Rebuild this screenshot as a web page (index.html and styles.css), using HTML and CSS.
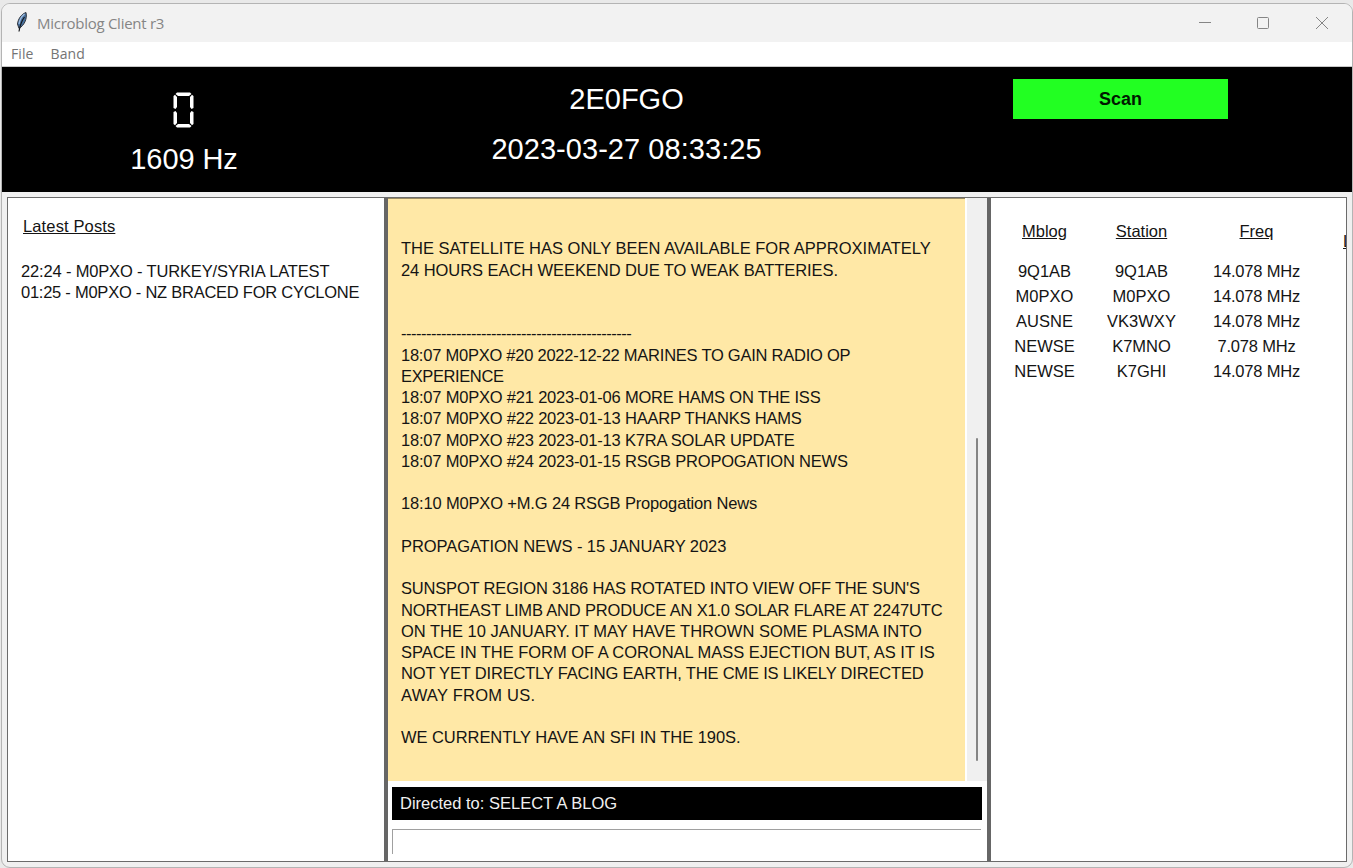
FILE: index.html
```html
<!DOCTYPE html>
<html lang="en">
<head>
<meta charset="utf-8">
<title>Microblog Client r3</title>
<link rel="stylesheet" href="styles.css">
</head>
<body>
<div class="window">
  <header class="titlebar">
    <svg class="feather" width="14" height="22" viewBox="0 0 14 22">
      <path d="M11 1.500C6.500 3 3 8 2.500 13L4 17.500C9 14.500 12.500 8 11 1.500Z" fill="#48729f" stroke="#30343c" stroke-width="1"/>
      <path d="M9.500 3C6 6 4.500 9 4 13" fill="none" stroke="#9dbbe0" stroke-width="1.300"/>
      <path d="M9.500 6C6.500 10 5 14 4 20.500" fill="none" stroke="#15171c" stroke-width="1.200"/>
    </svg>
    <span class="title">Microblog Client r3</span>
    <svg class="controls" width="132" height="14" viewBox="0 0 132 14" fill="none" stroke="#858585">
      <path d="M1 6.500H13"/>
      <rect x="59.500" y="1.500" width="11" height="11" rx="1"/>
      <path d="M118 1L130 13M130 1L118 13"/>
    </svg>
  </header>
  <nav class="menubar"><span>File</span><span>Band</span></nav>
  <section class="status">
    <div class="meter">
      <svg class="digit" width="22" height="36" viewBox="0 0 22 36" fill="#fff">
        <path d="M4 .5H17L18.500 2L16 4H5L2.500 2ZM5 32H16L18.500 34L17 35.500H4L2.500 34ZM.5 4L2 2.800L4 5V15L2.500 17L.5 16ZM20.500 4L19 2.800L17 5V15L18.500 17L20.500 16ZM.5 20L2.500 19L4 21V31L2 33.200L.5 32ZM20.500 20L18.500 19L17 21V31L19 33.200L20.500 32Z"/>
      </svg>
      <div class="hz">1609 Hz</div>
    </div>
    <div class="ident"><div class="call">2E0FGO</div><div class="clock">2023-03-27 08:33:25</div></div>
    <button class="scan">Scan</button>
  </section>
  <main class="panes">
    <section class="posts">
      <h2>Latest Posts</h2>
      <div class="row r1">22:24 - M0PXO - TURKEY/SYRIA LATEST</div>
      <div class="row r2">01:25 - M0PXO - NZ BRACED FOR CYCLONE</div>
    </section>
    <section class="feed">
      <div class="reader">
        <div class="text">
          <div class="l1">THE SATELLITE HAS ONLY BEEN AVAILABLE FOR APPROXIMATELY</div>
          <div class="l2">24 HOURS EACH WEEKEND DUE TO WEAK BATTERIES.</div>
          <div></div>
          <div></div>
          <div class="l5">----------------------------------------------</div>
          <div class="l6">18:07 M0PXO #20 2022-12-22 MARINES TO GAIN RADIO OP</div>
          <div class="l7">EXPERIENCE</div>
          <div class="l8">18:07 M0PXO #21 2023-01-06 MORE HAMS ON THE ISS</div>
          <div class="l9">18:07 M0PXO #22 2023-01-13 HAARP THANKS HAMS</div>
          <div class="l10">18:07 M0PXO #23 2023-01-13 K7RA SOLAR UPDATE</div>
          <div class="l11">18:07 M0PXO #24 2023-01-15 RSGB PROPOGATION NEWS</div>
          <div></div>
          <div class="l13">18:10 M0PXO +M.G 24 RSGB Propogation News</div>
          <div></div>
          <div class="l15">PROPAGATION NEWS - 15 JANUARY 2023</div>
          <div></div>
          <div class="l17">SUNSPOT REGION 3186 HAS ROTATED INTO VIEW OFF THE SUN'S</div>
          <div class="l18">NORTHEAST LIMB AND PRODUCE AN X1.0 SOLAR FLARE AT 2247UTC</div>
          <div class="l19">ON THE 10 JANUARY. IT MAY HAVE THROWN SOME PLASMA INTO</div>
          <div class="l20">SPACE IN THE FORM OF A CORONAL MASS EJECTION BUT, AS IT IS</div>
          <div class="l21">NOT YET DIRECTLY FACING EARTH, THE CME IS LIKELY DIRECTED</div>
          <div class="l22">AWAY FROM US.</div>
          <div></div>
          <div class="l24">WE CURRENTLY HAVE AN SFI IN THE 190S.</div>
        </div>
        <div class="scrollbar"><div class="thumb"></div></div>
      </div>
      <div class="directed"><span>Directed to: SELECT A BLOG</span></div>
      <div class="entry"></div>
    </section>
    <section class="stations">
      <div class="cell c1 head">Mblog</div><div class="cell c2 head">Station</div><div class="cell c3 head">Freq</div><div class="cut head">L</div>
      <div class="cell c1">9Q1AB</div><div class="cell c2">9Q1AB</div><div class="cell c3">14.078 MHz</div><div></div>
      <div class="cell c1">M0PXO</div><div class="cell c2">M0PXO</div><div class="cell c3">14.078 MHz</div><div></div>
      <div class="cell c1">AUSNE</div><div class="cell c2">VK3WXY</div><div class="cell c3">14.078 MHz</div><div></div>
      <div class="cell c1">NEWSE</div><div class="cell c2">K7MNO</div><div class="cell c3">7.078 MHz</div><div></div>
      <div class="cell c1">NEWSE</div><div class="cell c2">K7GHI</div><div class="cell c3">14.078 MHz</div><div></div>
    </section>
  </main>
</div>
</body>
</html>
```
FILE: styles.css
```css
* { box-sizing: border-box; }
body { margin: 0; height: 868px; overflow: hidden; background: #e9e9e9; padding: 3px 0 0 1px; font-family: "Liberation Sans", Arial, sans-serif; color: #141414; }
.window { width: 1352px; height: 865px; border: 1px solid #b4b4b4; border-radius: 9px; background: #f0f0f0; overflow: hidden; display: flex; flex-direction: column; }
.titlebar { height: 38px; flex: none; background: #f2f2f2; display: flex; align-items: center; padding: 0 22px 0 13px; }
.feather { margin-top: -2px; }
.title { margin-left: 8px; margin-top: -1px; font: 15px/20px "Open Sans", sans-serif; letter-spacing: -0.27px; color: #858585; white-space: nowrap; }
.controls { margin-left: auto; }
.menubar { height: 24px; flex: none; background: #fff; display: flex; gap: 17px; padding-left: 9px; font: 14px/24px "Open Sans", sans-serif; letter-spacing: 0.1px; color: #747474; }
.status { height: 126px; flex: none; border-top: 1px solid #c8c8c8; background: #000; color: #fff; display: flex; font-size: 29px; }
.meter { width: 364px; display: flex; flex-direction: column; align-items: center; padding-top: 25px; }
.digit { display: block; }
.hz { margin-top: 14px; line-height: 34px; letter-spacing: -0.1px; }
.ident { width: 521px; display: flex; flex-direction: column; align-items: center; padding-top: 15px; gap: 16px; line-height: 34px; }
.clock { letter-spacing: 0.05px; }
.scan { margin: 12px 0 0 126px; width: 215px; height: 40px; border: 0; border-radius: 0; padding: 1px 0 0; background: #22ff22; color: #001900; font: bold 18px "Liberation Sans", Arial, sans-serif; }
.panes { margin: 5px 5px 5px 5px; height: 665px; border: 1px solid #6b6b6b; display: flex; background: #fff; overflow: hidden; font-size: 16.500px; white-space: nowrap; }
.posts { width: 380px; flex: none; border-right: 4px solid #666; padding: 18px 0 0 13px; }
.posts h2 { margin: 0 0 24px 2px; font-size: 16.500px; font-weight: normal; line-height: 21px; letter-spacing: 0.13px; text-decoration: underline; }
.row { line-height: 21.250px; }
.r1 { letter-spacing: -0.16px; }
.r2 { letter-spacing: -0.25px; }
.feed { width: 603px; flex: none; border-right: 4px solid #666; display: flex; flex-direction: column; }
.reader { height: 583px; display: flex; }
.text { width: 577px; height: 583px; background: #ffe8a6; border-top: 1px solid #998a62; padding: 39.400px 0 0 13px; }
.text div { height: 21.250px; line-height: 21.250px; }
.text .l2 { letter-spacing: -0.07px; }
.text .l5 { letter-spacing: -0.49px; }
.text .l6 { letter-spacing: -0.24px; }
.text .l7 { letter-spacing: -0.38px; }
.text .l8, .text .l9, .text .l10, .text .l11 { letter-spacing: -0.2px; }
.text .l13 { letter-spacing: -0.16px; }
.text .l15 { letter-spacing: -0.08px; }
.text .l17, .text .l18, .text .l21 { letter-spacing: -0.18px; }
.text .l20 { letter-spacing: -0.035px; }
.text .l22 { letter-spacing: 0.25px; }
.text .l24 { letter-spacing: -0.06px; }
.scrollbar { margin-left: 2px; width: 20px; background: #f0f0f0; padding: 240px 0 0 9px; }
.thumb { width: 2px; height: 323px; background: #858585; border-radius: 1px; }
.directed { margin: 6px 0 0 4px; width: 590px; height: 33px; background: #000; color: #f0f0f0; padding-left: 8px; line-height: 33px; }
.entry { margin: 9px 0 0 4px; width: 589px; height: 25px; border-top: 1px solid #a0a0a0; border-left: 1px solid #a0a0a0; }
.stations { flex: 1; min-width: 0; overflow: hidden; display: grid; grid-template-columns: 107px 87px 143px 30px; grid-template-rows: 40px repeat(5, 25px); align-content: start; padding-top: 21px; line-height: 25px; }
.cell { text-align: center; }
.c3 { letter-spacing: -0.2px; }
.head { text-decoration: underline; letter-spacing: 0; }
.cut { padding: 10px 0 0 15px; }
```
